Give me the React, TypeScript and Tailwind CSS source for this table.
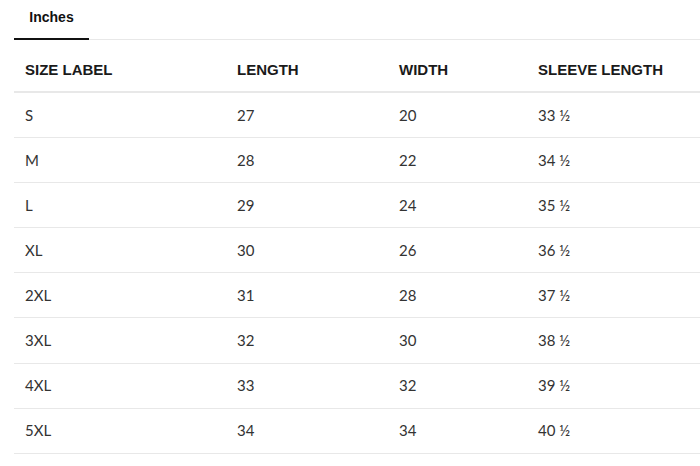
import React from "react";

const rows: [string, string, string, string][] = [
  ["S", "27", "20", "33 ½"],
  ["M", "28", "22", "34 ½"],
  ["L", "29", "24", "35 ½"],
  ["XL", "30", "26", "36 ½"],
  ["2XL", "31", "28", "37 ½"],
  ["3XL", "32", "30", "38 ½"],
  ["4XL", "33", "32", "39 ½"],
  ["5XL", "34", "34", "40 ½"],
];

const cols = "grid grid-cols-[212px_162px_139px_1fr]";

export default function App() {
  return (
    <div className="w-[700px] h-[466px] overflow-hidden bg-white pl-[14px]">
      <div className="flex border-b border-[#e8e8e8] h-[40px]">
        <div className="w-[75px] h-[40px] flex items-center justify-center border-b-2 border-[#111] pb-[4px] font-['Liberation_Sans',sans-serif] font-bold text-[14px] text-[#111]">
          Inches
        </div>
      </div>
      <div className={`${cols} h-[53px] items-center border-b-2 border-[#e8e8e8] font-['Liberation_Sans',sans-serif] font-bold text-[15px] text-[#1a1a1a]`}>
        <div className="pl-[11px] pt-[9px]">SIZE LABEL</div>
        <div className="pl-[11px] pt-[9px]">LENGTH</div>
        <div className="pl-[11px] pt-[9px]">WIDTH</div>
        <div className="pl-[11px] pt-[9px]">SLEEVE LENGTH</div>
      </div>
      {rows.map((r, i) => (
        <div
          key={i}
          className={`${cols} h-[45.1px] items-center border-b border-[#e8e8e8] font-['Lato',sans-serif] text-[15px] text-[#333]`}
        >
          {r.map((c, j) => (
            <div key={j} className="pl-[11px]">
              {c}
            </div>
          ))}
        </div>
      ))}
    </div>
  );
}
